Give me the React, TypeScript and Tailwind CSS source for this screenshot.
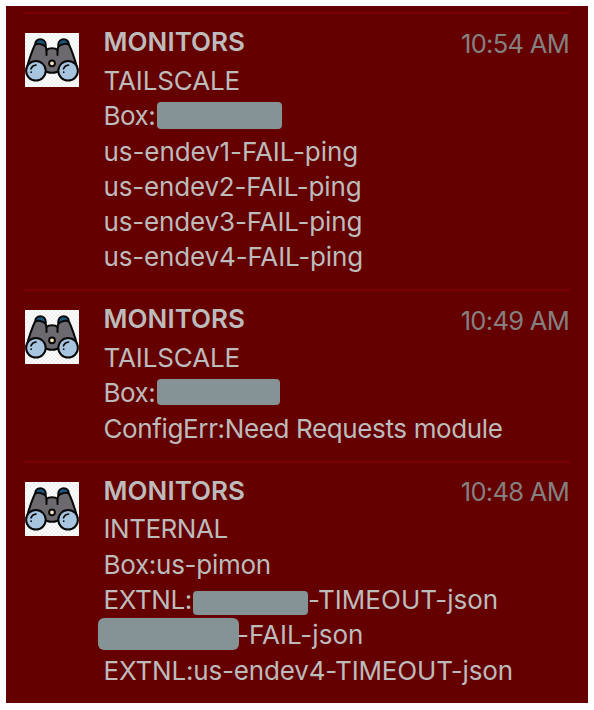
import type { ReactNode } from 'react';

function Binoculars() {
  return (
    <svg viewBox="0 0 54 54" className="block h-[54px] w-[54px] shrink-0 bg-[#fcfcfc]">
      <defs>
        <pattern id="checks" width="4" height="4" patternUnits="userSpaceOnUse">
          <path d="M0 0h2v2H0zM2 2h2v2H2z" fill="#f0f0f0" />
        </pattern>
      </defs>
      <rect width="54" height="54" fill="url(#checks)" />
      <g stroke="#080809" strokeWidth="2" strokeLinejoin="round" strokeLinecap="round">
        <path d="M10.200 12C9.800 8 12.500 6.300 15.300 6.300S20.800 8 20.800 12L20 15Z" fill="#1c587d" />
        <path d="M43.800 12C44.200 8 41.500 6.300 38.700 6.300S33.200 8 33.200 12L34 15Z" fill="#1c587d" />
        <path d="M9.800 12C12 10 18.500 10.500 20.800 14L21.500 17C24 14.800 30 14.800 32.500 17L33.200 14C35.500 10.500 42 10 44.200 12C47 18 50 27 52.500 36L35 37C33 39.300 30 39.800 27 39.800S21 39.300 19 37L1.500 36C4 27 7 18 9.800 12Z" fill="#6c696f" />
        <path d="M21.500 17V22M32.500 17V22" fill="none" />
        <circle cx="27" cy="30.300" r="2.900" fill="#fde5bd" />
        <circle cx="10.900" cy="37.800" r="9.800" fill="#a8c5df" />
        <circle cx="43.100" cy="37.800" r="9.800" fill="#a8c5df" />
        <path d="M6 35.800Q7.200 32.500 11 32M38.500 35.800Q39.700 32.500 43.500 32M6.200 39.100v.1M38.700 39.100v.1" fill="none" strokeWidth="1.700" />
      </g>
    </svg>
  );
}

function Message({ time, className, children }: { time: string; className: string; children: ReactNode }) {
  return (
    <article className={`flex border-t-2 border-[#7c0000] ${className}`}>
      <div className="w-[79.500px] shrink-0 pl-px pt-[19px]">
        <Binoculars />
      </div>
      <div className="min-w-0 flex-1 pt-[10.400px]">
        <header className="flex h-[38.600px] justify-between">
          <h2 className="font-semibold tracking-[0.060px]">MONITORS</h2>
          <time className="pr-[1px] pt-[1.600px] text-[25.500px] text-[#858080] tracking-[-0.700px]">{time}</time>
        </header>
        {children}
      </div>
    </article>
  );
}

function Line({ className, children }: { className: string; children: ReactNode }) {
  return <p className={`flex h-[35.300px] whitespace-pre ${className}`}>{children}</p>;
}

export default function App() {
  return (
    <div className="h-[710px] w-[594px] bg-white pl-[6px] pt-[6px] font-['Inter','Liberation_Sans',sans-serif] text-[26px] leading-[35.300px] text-[#bdbbbb]">
      <main className="h-[697px] w-[582px] bg-[#640000] pl-[18px] pr-[18px] pt-[6px]">
        <Message time="10:54 AM" className="h-[277px]">
          <Line className="tracking-[-0.120px]"><span>TAILSCALE</span></Line>
          <Line className="tracking-[-0.500px]"><span className="w-[53px]">Box:</span><span className="mt-[4px] h-[27px] w-[125px] rounded-[4px] bg-[#859296]" /></Line>
          <Line className="tracking-[-0.080px]"><span>us-endev1-FAIL-ping</span></Line>
          <Line className="tracking-[-0.180px]"><span>us-endev2-FAIL-ping</span></Line>
          <Line className="tracking-[-0.150px]"><span>us-endev3-FAIL-ping</span></Line>
          <Line className="tracking-[-0.150px]"><span>us-endev4-FAIL-ping</span></Line>
        </Message>
        <Message time="10:49 AM" className="h-[171.500px]">
          <Line className="tracking-[-0.120px]"><span>TAILSCALE</span></Line>
          <Line className="tracking-[-0.500px]"><span className="w-[53px]">Box:</span><span className="mt-[4px] h-[26px] w-[123px] rounded-[4px] bg-[#859296]" /></Line>
          <Line className="tracking-[-0.370px]"><span>ConfigErr:Need Requests module</span></Line>
        </Message>
        <Message time="10:48 AM" className="h-[240px]">
          <Line className="tracking-[-0.470px]"><span>INTERNAL</span></Line>
          <Line className="tracking-[-0.280px]"><span>Box:us-pimon</span></Line>
          <Line className="tracking-[0.020px]"><span className="w-[89px] tracking-[-0.450px]">EXTNL:</span><span className="mt-[8.500px] h-[24px] w-[115px] rounded-[4px] bg-[#859296]" /><span className="ml-[0.500px]">-TIMEOUT-json</span></Line>
          <Line className="tracking-[0.020px]"><span className="-ml-[5.500px] mt-[1px] h-[32px] w-[141px] rounded-[6px] bg-[#859296]" /><span className="-ml-[2px]">-FAIL-json</span></Line>
          <Line className="tracking-[-0.180px]"><span>EXTNL:us-endev4-TIMEOUT-json</span></Line>
        </Message>
      </main>
    </div>
  );
}
